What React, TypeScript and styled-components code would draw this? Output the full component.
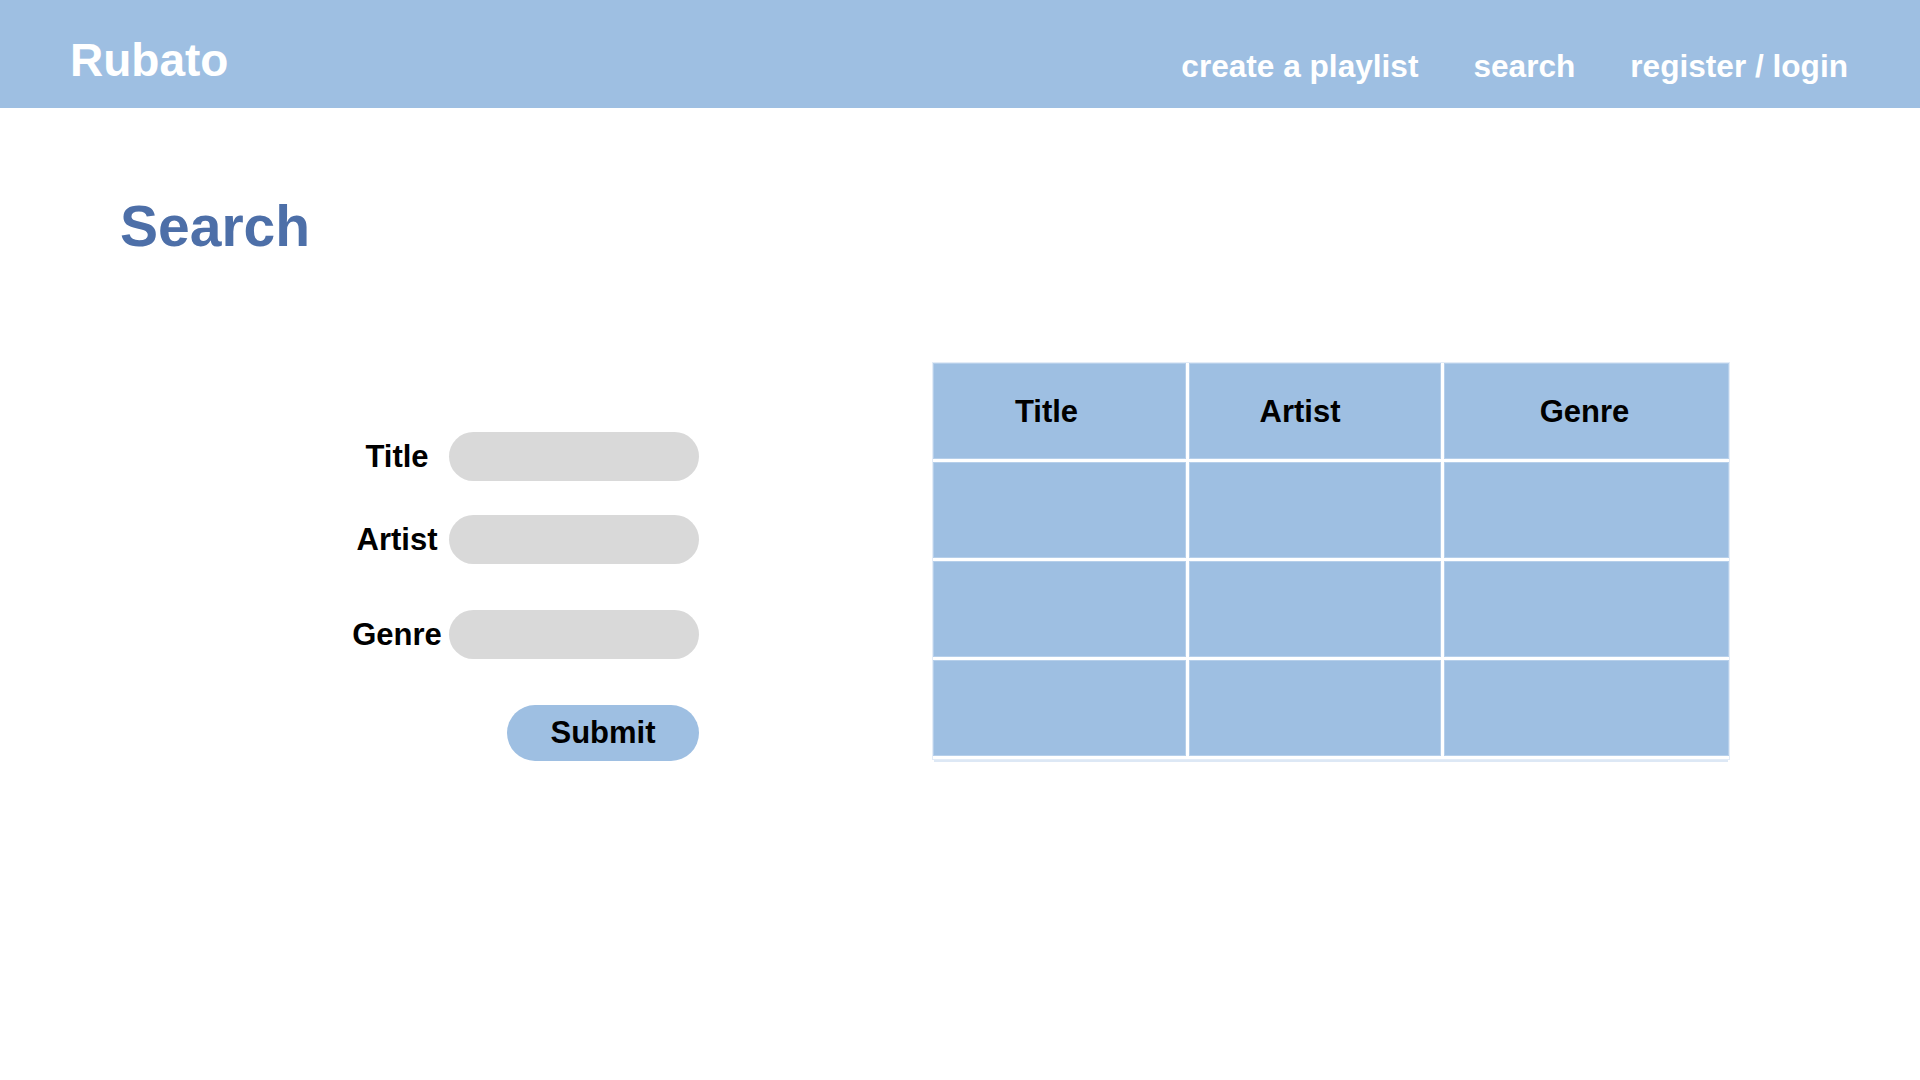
import React from "react";
import styled, { createGlobalStyle } from "styled-components";

const GlobalStyle = createGlobalStyle`
  html, body {
    margin: 0;
    padding: 0;
    background: #ffffff;
    font-family: "Liberation Sans", Arial, sans-serif;
  }
  * { box-sizing: border-box; }
`;

const BLUE = "#9ebfe2";

const Page = styled.div`
  width: 1920px;
  min-height: 1080px;
  background: #ffffff;
`;

const Header = styled.header`
  height: 108px;
  background: ${BLUE};
  display: flex;
  align-items: center;
  justify-content: space-between;
  padding: 0 72px 0 70px;
`;

const Brand = styled.div`
  color: #ffffff;
  font-weight: 700;
  font-size: 46px;
  line-height: 1;
  margin-top: 12px;
`;

const Nav = styled.nav`
  display: flex;
  gap: 55px;
  margin-top: 25px;
`;

const NavLink = styled.a`
  color: #ffffff;
  font-weight: 700;
  font-size: 31.6px;
  line-height: 1;
  text-decoration: none;
`;

const Main = styled.main`
  padding: 0 120px;
`;

const Heading = styled.h1`
  margin: 90px 0 0 0;
  font-size: 57px;
  line-height: 1;
  font-weight: 700;
  color: #4d6fa8;
`;

const Body = styled.div`
  display: flex;
  align-items: flex-start;
  margin-top: 108px;
  padding-left: 229px;
  gap: 234px;
`;

const Form = styled.form`
  margin-top: 69px;
  display: grid;
  grid-template-columns: 96px 250px;
  column-gap: 4px;
`;

const Label = styled.label<{ $gap: number }>`
  grid-column: 1;
  margin-top: ${(p) => p.$gap}px;
  height: 49px;
  display: flex;
  align-items: center;
  justify-content: center;
  white-space: nowrap;
  font-size: 31px;
  font-weight: 700;
  color: #000000;
`;

const Field = styled.input<{ $gap: number }>`
  grid-column: 2;
  margin-top: ${(p) => p.$gap}px;
  height: 49px;
  width: 250px;
  border: none;
  outline: none;
  border-radius: 25px;
  background: #d9d9d9;
  padding: 0 20px;
  font: inherit;
  font-size: 20px;
`;

const SubmitButton = styled.button`
  grid-column: 2;
  justify-self: end;
  margin-top: 46px;
  width: 192px;
  height: 56px;
  border: none;
  border-radius: 28px;
  background: ${BLUE};
  color: #000000;
  font-family: "Liberation Sans", Arial, sans-serif;
  font-weight: 700;
  font-size: 31px;
  cursor: pointer;
`;

const Table = styled.div`
  width: 796px;
  display: grid;
  grid-template-columns: 253px 252px 285px;
  grid-auto-rows: 96px;
  gap: 3px;
  outline: 1px solid #e3ecf7;
  border-bottom: 3px solid #ffffff;
  box-shadow: 0 4px 0 -1px #dde8f5;
`;

const Cell = styled.div<{ $shift?: number }>`
  background: ${BLUE};
  box-shadow: inset 0 0 0 1px #b6cfea;
  display: flex;
  align-items: center;
  justify-content: center;
  padding-top: 2px;
  padding-right: ${(p) => (p.$shift ?? 0) * 2}px;
  font-size: 31px;
  font-weight: 700;
  color: #000000;
`;

const fields = [
  { label: "Title", gap: 0 },
  { label: "Artist", gap: 34 },
  { label: "Genre", gap: 46 },
];

const headers = [
  { text: "Title", shift: 13 },
  { text: "Artist", shift: 15 },
  { text: "Genre", shift: 2 },
];

export default function App() {
  return (
    <Page>
      <GlobalStyle />
      <Header>
        <Brand>Rubato</Brand>
        <Nav>
          <NavLink href="#">create a playlist</NavLink>
          <NavLink href="#">search</NavLink>
          <NavLink href="#">register / login</NavLink>
        </Nav>
      </Header>
      <Main>
        <Heading>Search</Heading>
        <Body>
          <Form onSubmit={(e) => e.preventDefault()}>
            {fields.map((f) => (
              <React.Fragment key={f.label}>
                <Label $gap={f.gap}>{f.label}</Label>
                <Field $gap={f.gap} aria-label={f.label} />
              </React.Fragment>
            ))}
            <SubmitButton type="submit">Submit</SubmitButton>
          </Form>
          <Table role="table">
            {headers.map((h) => (
              <Cell key={h.text} $shift={h.shift} role="columnheader">
                {h.text}
              </Cell>
            ))}
            {Array.from({ length: 9 }).map((_, i) => (
              <Cell key={i} role="cell" />
            ))}
          </Table>
        </Body>
      </Main>
    </Page>
  );
}
